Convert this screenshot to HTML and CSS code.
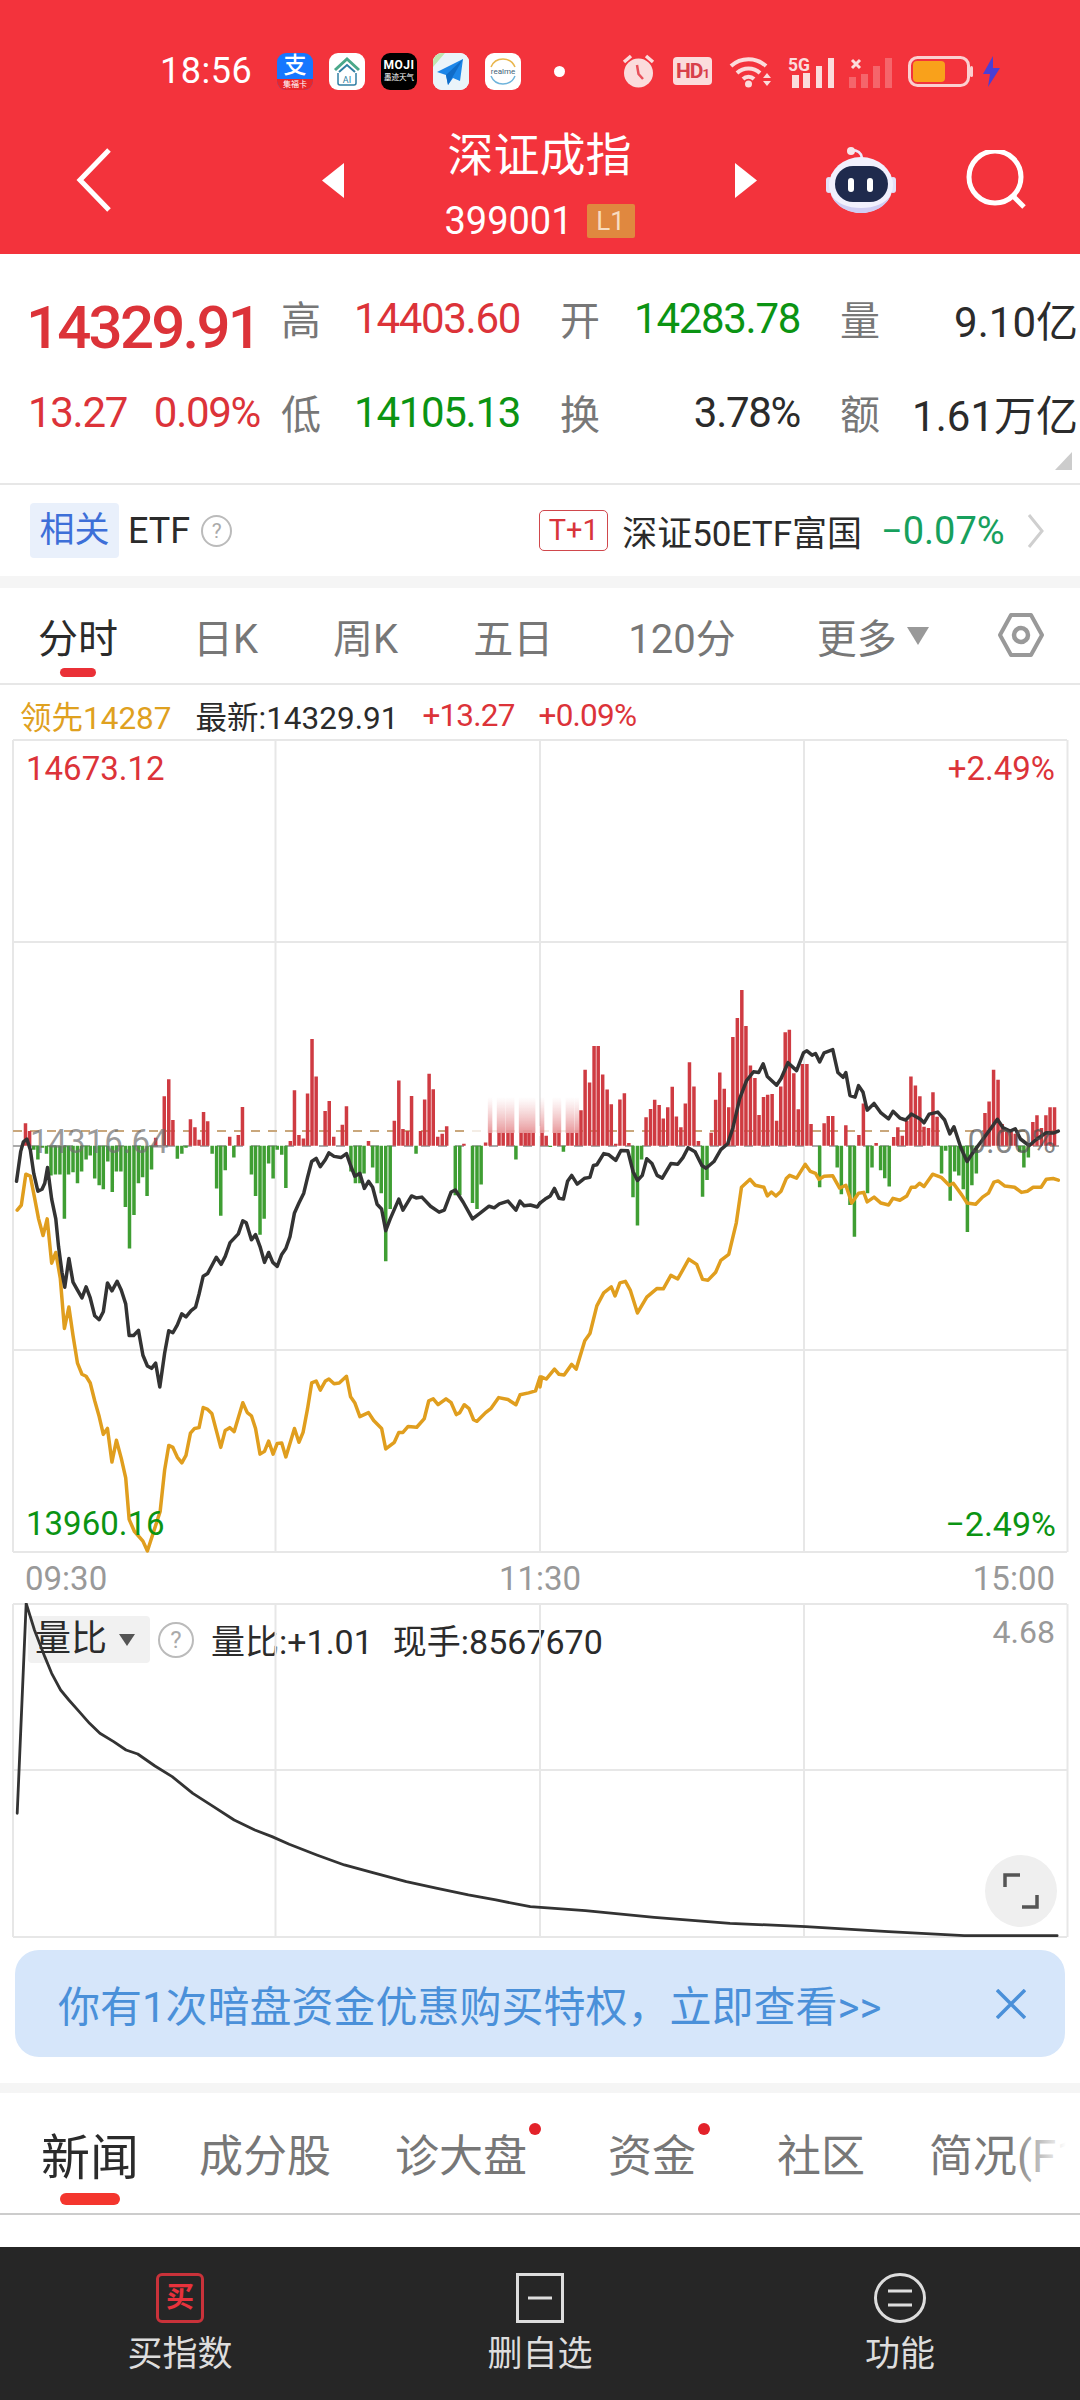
FILE: index.html
```html
<!doctype html>
<html lang="zh-CN">

<head>
    <meta charset="utf-8">
    <meta name="viewport" content="width=device-width, initial-scale=1">
    <title>深证成指</title>
    <link rel="stylesheet" href="styles.css">
</head>

<body>
<div class="page">

    <header class="header">
        <div class="status">
            <span class="status-time">18:56</span>
            <span class="app app-alipay"><b>支</b><i>集福卡</i></span>
            <span class="app app-home">
                <svg width="36" height="37" viewBox="0 0 36 37"><path d="M6 17 18 6l12 11" fill="none" stroke="#4aa88a" stroke-width="3"/><path d="M10 19 18 12l8 7" fill="none" stroke="#2f7fa4" stroke-width="2"/><path d="M9 20v10a2 2 0 0 0 2 2h14a2 2 0 0 0 2-2V20" fill="none" stroke="#2f7fa4" stroke-width="1.500"/><text x="18" y="30" font-size="9" text-anchor="middle" fill="#2f7fa4" class="svg-text">AI</text></svg>
            </span>
            <span class="app app-moji"><b>MOJI</b><i>墨迹天气</i></span>
            <span class="app app-plane">
                <svg width="36" height="37" viewBox="0 0 36 37"><rect width="36" height="37" fill="#eaf4fa"/><path d="M0 0h12L0 14z" fill="#bfe6b0"/><path d="M30 6 4 19l9 3 2 10 5-7 7 3z" fill="#1c86e8"/><path d="M30 6 13 22l2 10z" fill="#0f6cc8"/></svg>
            </span>
            <span class="app app-realme">
                <svg width="36" height="37" viewBox="0 0 36 37"><path d="M6 14a13 13 0 0 1 24 0" fill="none" stroke="#e9b64d" stroke-width="1.500"/><path d="M6 23a13 13 0 0 0 24 0" fill="none" stroke="#6fb4dc" stroke-width="1.500"/><text x="18" y="21" font-size="8" text-anchor="middle" fill="#3f5f78" class="svg-text">realme</text></svg>
            </span>
            <span class="status-dot"></span>
            <svg class="st-alarm" width="33" height="36" viewBox="0 0 33 36"><circle cx="16.500" cy="20" r="14.500" fill="#fbdcdc"/><path d="M15 12l1.500 9 4.500 5" fill="none" stroke="#e8505a" stroke-width="2.500"/><path d="M2 9l7-6M31 9l-7-6" stroke="#fbdcdc" stroke-width="3.500"/></svg>
            <span class="st-hd">HD<small>1</small></span>
            <svg class="st-wifi" width="43" height="33" viewBox="0 0 43 33"><path d="M2 11a26 26 0 0 1 35 0M8 18a17 17 0 0 1 23 0M14 24a8 8 0 0 1 11 0" fill="none" stroke="#fbdcdc" stroke-width="4"/><circle cx="19.500" cy="29" r="3.500" fill="#fbdcdc"/><path d="M34 23l4-5 4 5zM34 26l4 5 4-5z" fill="#fbdcdc"/></svg>
            <span class="st-signal">
                <svg width="46" height="33" viewBox="0 0 46 33"><text x="0" y="16" font-size="19" font-weight="700" textLength="22" lengthAdjust="spacingAndGlyphs" fill="#fbdcdc" class="svg-text">5G</text><path d="M4 20h7v13H4zM15 18h7v15h-7zM28 11h6v22h-6zM40 3h6v30h-6z" fill="#fbdcdc"/></svg>
            </span>
            <svg class="st-signal2" width="44" height="33" viewBox="0 0 44 33"><path d="M4 5l8 8M12 5l-8 8" stroke="#fbdcdc" stroke-width="3"/><path d="M1 22h7v11H1zM13 19h7v14h-7zM25 11h7v22h-7zM37 3h7v30h-7z" fill="#fbdcdc" opacity=".3"/></svg>
            <svg class="st-battery" width="66" height="31" viewBox="0 0 66 31"><rect x="1.500" y="1.500" width="59" height="28" rx="8" fill="none" stroke="#fbd0d0" stroke-width="3"/><rect x="5" y="5" width="32" height="21" rx="4" fill="#f9a11b"/><rect x="62" y="10" width="3" height="11" rx="1.500" fill="#fbd0d0"/></svg>
            <svg class="st-bolt" width="19" height="31" viewBox="0 0 19 31"><path d="M11 0 1 18h7L6 31l12-19h-7z" fill="#4b3fd6"/></svg>
        </div>

        <nav class="nav">
            <svg class="nav-back" width="36" height="64" viewBox="0 0 36 64"><path d="M33 2 4 32l29 30" fill="none" stroke="#fff" stroke-width="5"/></svg>
            <svg class="nav-prev" width="22" height="35" viewBox="0 0 22 35"><path d="M22 0v35L0 17.500z" fill="#fff"/></svg>
            <div class="nav-title">
                <div class="nav-name">深证成指</div>
                <div class="nav-code">399001<span class="nav-badge">L1</span></div>
            </div>
            <svg class="nav-next" width="22" height="35" viewBox="0 0 22 35"><path d="M0 0v35l22-17.500z" fill="#fff"/></svg>
            <svg class="nav-robot" width="72" height="66" viewBox="0 0 72 66"><path d="M26 3q10 0 11 8" fill="none" stroke="#ece8fb" stroke-width="2.500"/><circle cx="26" cy="4" r="4" fill="#f6e6ea"/><rect x="1" y="30" width="6" height="16" rx="3" fill="#e3e0f8"/><rect x="65" y="30" width="6" height="16" rx="3" fill="#e3e0f8"/><ellipse cx="36" cy="38" rx="32" ry="28" fill="#f1f0fd"/><path d="M6 48a32 28 0 0 0 60 0 32 20 0 0 1-60 0z" fill="#cfcdf3"/><rect x="10" y="19" width="53" height="36" rx="18" fill="#1f2a4d"/><rect x="23" y="31" width="6" height="14" rx="3" fill="#fff"/><rect x="42" y="31" width="6" height="14" rx="3" fill="#fff"/></svg>
            <svg class="nav-search" width="62" height="60" viewBox="0 0 62 60"><circle cx="29" cy="27" r="26" fill="none" stroke="#fff" stroke-width="5"/><path d="M47 46l11 11" stroke="#fff" stroke-width="5"/></svg>
        </nav>
    </header>

    <section class="quote">
        <div class="quote-price">14329.91</div>
        <div class="quote-key">高</div>
        <div class="quote-val up">14403.60</div>
        <div class="quote-key">开</div>
        <div class="quote-val down">14283.78</div>
        <div class="quote-key">量</div>
        <div class="quote-val quote-big">9.10亿</div>

        <div class="quote-change"><span>13.27</span><span>0.09%</span></div>
        <div class="quote-key">低</div>
        <div class="quote-val down">14105.13</div>
        <div class="quote-key">换</div>
        <div class="quote-val">3.78%</div>
        <div class="quote-key">额</div>
        <div class="quote-val quote-big">1.61万亿</div>
        <span class="quote-corner"></span>
    </section>

    <section class="etf">
        <span class="etf-tag">相关</span>
        <span class="etf-label">ETF</span>
        <span class="help etf-help">?</span>
        <span class="etf-t1">T+1</span>
        <span class="etf-name">深证50ETF富国</span>
        <span class="etf-pct">−0.07%</span>
        <svg class="etf-more" width="17" height="34" viewBox="0 0 17 34"><path d="M2 1l13 16L2 33" fill="none" stroke="#cfcfcf" stroke-width="3"/></svg>
    </section>

    <div class="band"></div>

    <section class="periods">
        <span class="period active">分时</span>
        <span class="period">日K</span>
        <span class="period">周K</span>
        <span class="period">五日</span>
        <span class="period">120分</span>
        <span class="period period-more">更多<i class="caret"></i></span>
        <svg class="periods-gear" width="48" height="46" viewBox="0 0 48 46"><path d="M14 3h20l11 20-11 20H14L3 23z" fill="none" stroke="#999" stroke-width="4" stroke-linejoin="round"/><circle cx="24" cy="23" r="7" fill="none" stroke="#999" stroke-width="4.500"/></svg>
    </section>

    <section class="legend">
        <span class="lead">领先14287</span>
        <span>最新:14329.91</span>
        <span class="up">+13.27</span>
        <span class="up">+0.09%</span>
    </section>

    <section class="chart">
        <svg class="chart-svg" width="1080" height="814" viewBox="0 739 1080 814">
            <defs>
                <linearGradient id="bar-fade" gradientUnits="userSpaceOnUse" x1="0" y1="372" x2="0" y2="463">
                    <stop offset="0" stop-color="#e89a9e" stop-opacity="0"/>
                    <stop offset="1" stop-color="#e07478" stop-opacity=".75"/>
                </linearGradient>
            </defs>
            <path class="grid" d="M13 740H1067M13 942H1067M13 1350H1067M13 1552H1067M13 740V1552M275.500 740V1552M540 740V1552M804 740V1552M1067.500 740V1552"/>
            <path class="dash-prev" d="M13 1131H1067"/>
            <path class="dash-base" d="M13 1146H1067"/>
            <rect class="dash-wipe" x="468" y="1126" width="112" height="10"/>

            <g class="soft-group" transform="translate(0 950) scale(.3444 .3954)">
                <path class="bar-soft" stroke="url(#bar-fade)" d="M1423 463V372M1449 463V372M1461 463V372M1475 463V372M1487 463V372M1513 463V372M1525 463V372M1536 463V372M1548 463V372"/>
            </g>
            <g class="soft-group" transform="translate(540 950) scale(.3444 .3954)">
                <path class="bar-soft" stroke="url(#bar-fade)" d="M6 463V372M43 463V372M55 463V372M81 463V372M93 463V372M107 463V372"/>
            </g>

            <g transform="translate(0 950) scale(.3444 .3954)">
                <path class="bar-up" d="M74 495V438M86 495V458M452 495V475M477 495V370M490 495V327M502 495V430M553 495V428M566 495V448M578 495V480M591 495V410M603 495V433M667 495V472M692 495V468M704 495V397M843 495V483M855 495V355M868 495V468M881 495V477M893 495V363M906 495V225M918 495V320M944 495V407M956 495V382M969 495V472M994 495V442M1006 495V395M1070 495V483M1145 495V432M1158 495V330M1170 495V453M1183 495V458M1195 495V369M1221 495V458M1233 495V378M1246 495V313M1258 495V352M1271 495V472M1284 495V465M1297 495V446M1347 495V490M1410 495V487M1423 495V463M1449 495V463M1461 495V463M1475 495V463M1487 495V463M1513 495V463M1525 495V463M1536 495V463M1548 495V463"/>
                <path class="bar-down" d="M98 495V505M110 495V530M123 495V500M135 495V515M148 495V570M161 495V568M174 495V568M187 495V680M199 495V568M212 495V562M225 495V590M237 495V560M250 495V530M262 495V520M275 495V578M288 495V595M300 495V605M313 495V535M326 495V612M338 495V560M351 495V560M364 495V650M376 495V755M389 495V670M402 495V590M414 495V575M427 495V622M440 495V555M515 495V528M528 495V515M540 495V500M616 495V515M629 495V603M641 495V672M654 495V557M679 495V525M730 495V568M742 495V622M755 495V720M767 495V680M780 495V540M793 495V578M805 495V505M818 495V518M830 495V602M1019 495V560M1032 495V590M1045 495V590M1057 495V565M1082 495V550M1095 495V590M1107 495V615M1120 495V787M1133 495V655M1208 495V515M1322 495V620M1335 495V620M1372 495V640M1385 495V655M1397 495V593M1498 495V530"/>
            </g>
            <g transform="translate(540 950) scale(.3444 .3954)">
                <path class="bar-up" d="M6 495V463M18 495V470M43 495V463M55 495V463M81 495V463M93 495V463M107 495V463M119 495V405M131 495V303M144 495V335M157 495V243M169 495V243M182 495V315M195 495V353M207 495V390M220 495V490M232 495V378M245 495V362M258 495V488M308 495V423M321 495V402M333 495V379M346 495V392M358 495V426M371 495V398M384 495V346M396 495V421M409 495V448M422 495V388M434 495V284M447 495V345M460 495V483M497 495V462M510 495V379M522 495V310M535 495V351M548 495V398M560 495V220M573 495V172M586 495V101M598 495V192M611 495V292M624 495V324M636 495V417M649 495V372M661 495V366M674 495V364M687 495V432M699 495V345M712 495V208M724 495V202M737 495V312M750 495V403M762 495V288M775 495V288M787 495V440M825 495V438M837 495V420M850 495V420M888 495V443M926 495V468M939 495V388M976 495V488M1027 495V473M1039 495V448M1052 495V470M1065 495V432M1077 495V320M1090 495V343M1103 495V370M1115 495V447M1128 495V450M1141 495V360M1153 495V422M1292 495V412M1304 495V383M1317 495V303M1330 495V328M1342 495V440M1355 495V460M1368 495V460M1380 495V465M1431 495V435M1443 495V418M1456 495V450M1469 495V418M1481 495V398M1494 495V398"/>
                <path class="bar-down" d="M30 495V498M68 495V510M270 495V625M283 495V697M295 495V530M472 495V624M485 495V582M812 495V600M863 495V550M875 495V618M900 495V645M913 495V725M951 495V615M964 495V550M989 495V557M1001 495V577M1014 495V598M1166 495V565M1178 495V508M1191 495V634M1204 495V560M1216 495V570M1229 495V605M1241 495V713M1254 495V595M1267 495V565M1393 495V510M1405 495V550M1418 495V525"/>
            </g>

            <g transform="translate(0 950) scale(.3444 .3954)">
                <polyline class="line-lead" points="50,658 62,645 75,567 88,572 100,625 112,680 125,722 137,680 150,792 162,765 175,830 187,957 200,903 212,975 225,1045 238,1073 250,1078 262,1095 275,1140 288,1180 300,1225 312,1210 325,1295 338,1240 352,1285 365,1335 375,1440 390,1470 415,1495 428,1520 465,1420 478,1315 490,1253 502,1258 515,1283 528,1297 540,1278 553,1222 565,1210 578,1208 590,1157 603,1162 615,1172 628,1215 641,1258 654,1215 667,1208 680,1218 705,1145 718,1170 730,1178 742,1210 755,1275 768,1268 780,1242 793,1275 805,1248 818,1247 830,1282 855,1210 868,1245 880,1220 893,1160 905,1095 918,1090 930,1113 945,1090 955,1085 970,1097 985,1095 1006,1078 1018,1130 1030,1145 1045,1180 1070,1170 1085,1190 1108,1210 1120,1262 1145,1245 1158,1220 1170,1220 1185,1205 1210,1207 1232,1185 1245,1140 1258,1135 1272,1150 1295,1135 1310,1145 1325,1175 1335,1170 1348,1150 1362,1160 1375,1188 1385,1192 1410,1170 1425,1160 1448,1132 1475,1137 1498,1150 1510,1125 1535,1120 1555,1115 1568,1080"/>
                <polyline class="line-price" points="48,585 60,510 68,485 78,478 88,505 98,565 110,610 122,605 130,590 138,550 150,630 162,680 170,750 180,815 188,853 200,780 212,840 225,860 238,880 250,852 262,880 275,925 288,935 300,915 312,842 325,862 340,838 352,860 365,895 375,975 388,975 402,962 415,1025 428,1052 440,1058 452,1045 464,1105 478,1020 490,963 502,968 515,948 528,920 540,928 555,912 568,903 578,870 590,825 603,818 628,777 642,795 654,775 668,740 692,718 705,685 715,690 730,733 742,720 755,750 768,790 780,765 792,790 805,800 818,770 830,755 842,725 855,665 868,640 882,615 893,575 905,535 918,527 930,548 945,530 955,513 970,522 990,525 1006,515 1018,545 1030,572 1045,565 1058,603 1070,585 1082,600 1095,643 1108,655 1120,710 1133,680 1158,630 1170,658 1195,622 1208,627 1225,625 1250,648 1275,663 1290,658 1310,612 1322,607 1345,638 1372,680 1395,665 1420,648 1435,652 1450,642 1475,635 1498,658 1510,635 1522,647 1540,645 1560,650 1568,640"/>
            </g>
            <g transform="translate(540 950) scale(.3444 .3954)">
                <polyline class="line-lead" points="0,1105 5,1080 18,1085 42,1060 55,1073 70,1075 92,1048 105,1060 130,988 145,970 165,900 185,867 207,852 218,875 232,842 248,838 262,860 283,918 310,878 340,856 358,857 380,823 400,832 432,782 455,795 472,833 488,835 510,815 525,785 548,770 570,690 585,600 610,580 625,595 650,600 660,622 672,612 685,622 700,610 715,578 725,570 745,577 770,542 785,560 800,565 810,580 825,572 850,571 870,602 888,595 905,640 925,615 940,613 950,637 970,625 990,640 1012,645 1025,628 1045,633 1065,622 1078,600 1090,600 1102,590 1115,598 1140,567 1165,575 1188,595 1200,590 1225,620 1240,640 1265,643 1285,625 1302,615 1318,587 1330,584 1350,597 1378,600 1398,613 1415,610 1432,600 1455,600 1470,580 1490,578 1505,582"/>
                <polyline class="line-price" points="0,640 15,630 30,622 42,603 55,628 68,630 80,585 92,570 108,592 130,577 145,575 155,545 165,543 185,515 200,518 220,532 235,507 255,508 270,560 283,583 297,570 310,528 325,540 340,570 355,577 380,540 400,542 415,525 430,500 450,510 470,545 482,552 505,535 525,505 545,490 560,450 580,375 600,330 620,308 635,310 648,288 660,320 687,342 700,325 720,285 745,305 765,260 775,255 790,266 800,262 812,283 825,260 850,252 865,310 880,322 888,310 900,368 915,372 925,343 938,360 950,405 970,388 990,412 1012,427 1025,408 1045,425 1062,430 1078,415 1105,428 1115,437 1130,415 1155,410 1175,430 1190,465 1202,447 1222,500 1240,535 1255,515 1285,480 1310,450 1328,428 1345,450 1365,458 1380,452 1395,478 1420,495 1440,480 1470,462 1490,463 1505,458"/>
            </g>
        </svg>
        <span class="axis-label top-left up">14673.12</span>
        <span class="axis-label top-right up">+2.49%</span>
        <span class="axis-label mid-left">14316.64</span>
        <span class="axis-label mid-right">0.00%</span>
        <span class="axis-label bottom-left down">13960.16</span>
        <span class="axis-label bottom-right down">−2.49%</span>
    </section>

    <div class="times"><span>09:30</span><span>11:30</span><span>15:00</span></div>

    <section class="volume">
        <div class="volume-head">
            <span class="volume-pick">量比<i class="caret caret-dark"></i></span>
            <span class="help volume-help">?</span>
            <span class="volume-text">量比:+1.01</span>
            <span class="volume-text">现手:8567670</span>
        </div>
        <svg class="chart-svg volume-svg" width="1080" height="335" viewBox="0 1603 1080 335">
            <path class="grid" d="M13 1604H1067M13 1770H1067M13 1937H1067M13 1604V1937M275.500 1604V1937M540 1604V1937M804 1604V1937M1067.500 1604V1937"/>
            <g transform="translate(0 1560) scale(.6887 .3333)">
                <polyline class="line-ratio" points="25,760 38,130 50,210 65,290 75,340 88,390 100,420 115,455 130,490 145,520 165,545 183,570 200,582 225,618 250,650 280,700 310,740 340,780 370,810 395,830 420,853 460,885 500,915 540,937 590,965 635,985 680,1005 720,1020 770,1040 850,1052 950,1072 1060,1090 1170,1100 1290,1115 1400,1127 1535,1127"/>
            </g>
        </svg>
        <span class="volume-max">4.68</span>
        <span class="expand">
            <svg width="36" height="38" viewBox="0 0 36 38"><path d="M2 15V3h15M34 23v12H19" fill="none" stroke="#555" stroke-width="3.500"/></svg>
        </span>
    </section>

    <section class="banner">
        <span class="banner-text">你有1次暗盘资金优惠购买特权，立即查看&gt;&gt;</span>
        <svg width="30" height="30" viewBox="0 0 30 30"><path d="M1 1l28 28M29 1 1 29" stroke="#4a90d9" stroke-width="3.500"/></svg>
    </section>

    <div class="band band-news"></div>

    <section class="news-tabs">
        <span class="news-tab active">新闻</span>
        <span class="news-tab">成分股</span>
        <span class="news-tab dotted">诊大盘</span>
        <span class="news-tab dotted">资金</span>
        <span class="news-tab">社区</span>
        <span class="news-tab">简况(F10)</span>
    </section>

    <div class="news-body"></div>

    <footer class="actions">
        <div class="action">
            <span class="action-buy">买</span>
            <span class="action-label">买指数</span>
        </div>
        <div class="action">
            <svg width="48" height="50" viewBox="0 0 48 50"><rect x="1.500" y="1.500" width="45" height="47" fill="none" stroke="#ddd" stroke-width="3"/><path d="M12 25h24" stroke="#ddd" stroke-width="3"/></svg>
            <span class="action-label">删自选</span>
        </div>
        <div class="action">
            <svg width="52" height="50" viewBox="0 0 52 50"><ellipse cx="26" cy="25" rx="24.500" ry="23.500" fill="none" stroke="#ddd" stroke-width="3"/><path d="M14 18h24M14 32h24" stroke="#ddd" stroke-width="3"/></svg>
            <span class="action-label">功能</span>
        </div>
    </footer>
</div>
</body>
</html>
```

FILE: styles.css
```css
:root {
    /* Colors */
    --color-header: #f3333c;
    --color-up: #dc3339;
    --color-down: #0b9413;
    --color-text: #2b2b2b;
    --color-muted: #777;
    --color-line: #e7e7e7;
    --color-band: #f5f5f5;

    /* Typography */
    --font-stack: Roboto, 'Noto Sans CJK SC', sans-serif;
}

*, *::before, *::after {
    box-sizing: border-box;
}

body {
    margin: 0;
    background: #fff;
    font-family: var(--font-stack);
    color: var(--color-text);
}

.page {
    width: 1080px;
    height: 2400px;
    overflow: hidden;
    display: flex;
    flex-direction: column;
}

.svg-text {
    font-family: var(--font-stack);
}

.up {
    color: var(--color-up);
}

.down {
    color: var(--color-down);
}

/* Header */
.header {
    height: 254px;
    background: var(--color-header);
    color: #fff;
}

.status {
    height: 112px;
    padding: 30px 0 0 160px;
    display: flex;
    align-items: center;
}

.status-time {
    width: 93px;
    margin-right: 24px;
    font-size: 36px;
    letter-spacing: .5px;
}

.app {
    width: 36px;
    height: 37px;
    margin-right: 16px;
    border-radius: 9px;
    background: #fff;
    overflow: hidden;
    display: flex;
    flex-direction: column;
    align-items: center;
}

.app b, .app i {
    font-style: normal;
    line-height: 1;
}

.app-alipay {
    background: #1677ff;
    overflow: visible;
}

.app-alipay b {
    flex: 1;
    font-size: 23px;
    font-weight: 500;
    line-height: 26px;
}

.app-alipay i {
    width: 100%;
    border-radius: 0 0 9px 9px;
    background: #e8262a;
    font-size: 8px;
    line-height: 11px;
    text-align: center;
}

.app-moji {
    background: #000;
    padding-top: 6px;
}

.app-moji b {
    font-size: 12px;
    letter-spacing: .5px;
    margin-bottom: 3px;
}

.app-moji i {
    font-size: 7.500px;
    white-space: nowrap;
}

.status-dot {
    width: 11px;
    height: 11px;
    margin: 0 57px 0 17px;
    border-radius: 50%;
    background: #fff;
}

.st-hd {
    width: 39px;
    height: 28px;
    margin: 0 17px 0 18px;
    border-radius: 4px;
    background: #fbdcdc;
    color: #d8404a;
    font-size: 21px;
    font-weight: 700;
    line-height: 28px;
    text-align: center;
    letter-spacing: -1px;
    white-space: nowrap;
}

.st-hd small {
    font-size: 13px;
}

.st-wifi {
    margin-right: 16px;
}

.st-signal {
    height: 33px;
    margin-right: 14px;
}

.st-signal2 {
    margin-right: 16px;
}

.st-battery {
    margin-right: 8px;
}

.nav {
    height: 136px;
    padding-left: 76px;
    display: flex;
    align-items: center;
}

.nav-prev {
    margin-left: 210px;
}

.nav-title {
    width: 391px;
    padding-top: 7px;
    display: flex;
    flex-direction: column;
    align-items: center;
    gap: 18px;
}

.nav-name {
    font-size: 46px;
    line-height: 56px;
}

.nav-code {
    font-size: 38px;
    line-height: 40px;
    display: flex;
    align-items: center;
    gap: 14px;
}

.nav-badge {
    width: 48px;
    height: 34px;
    background: #e0883f;
    border-radius: 2px;
    color: #f8dcc0;
    font-size: 26px;
    line-height: 34px;
    text-align: center;
}

.nav-robot {
    margin-left: 68px;
}

.nav-search {
    margin-left: 69px;
}

/* Quote numbers */
.quote {
    position: relative;
    height: 231px;
    padding: 17px 2px 0 28px;
    border-bottom: 2px solid var(--color-line);
    display: grid;
    grid-template-columns: 253px 40px 199px 80px 200px 80px 198px;
    grid-template-rows: 94px 94px;
    align-items: center;
}

.quote-price {
    margin-left: -2px;
    padding-top: 18px;
    font-size: 60px;
    font-weight: 500;
    letter-spacing: -2.800px;
    color: var(--color-up);
}

.quote-change {
    width: 232px;
    display: flex;
    justify-content: space-between;
    font-size: 42px;
    color: var(--color-up);
    letter-spacing: -1.300px;
}

.quote-key {
    font-size: 40px;
    color: var(--color-muted);
    text-align: right;
}

.quote-val {
    font-size: 42px;
    text-align: right;
    letter-spacing: -1.300px;
    white-space: nowrap;
}

.quote-big {
    letter-spacing: 0;
}

.quote-corner {
    position: absolute;
    right: 8px;
    bottom: 13px;
    border-style: solid;
    border-width: 0 0 18px 17px;
    border-color: transparent transparent #ccc transparent;
}

/* ETF row */
.etf {
    height: 91px;
    padding-left: 30px;
    display: flex;
    align-items: center;
}

.etf-tag {
    width: 89px;
    height: 55px;
    border-radius: 4px;
    background: #e9f0fb;
    color: #3d6fd8;
    font-size: 35px;
    line-height: 55px;
    text-align: center;
}

.etf-label {
    margin-left: 9px;
    font-size: 36px;
}

.help {
    width: 31px;
    height: 32px;
    border: 2px solid #bbb;
    border-radius: 50%;
    color: #aaa;
    font-size: 21px;
    line-height: 28px;
    text-align: center;
}

.etf-help {
    margin-left: 11px;
}

.etf-t1 {
    width: 69px;
    height: 41px;
    margin-left: 307px;
    border: 1px solid #d0474c;
    border-radius: 5px;
    color: #d8343a;
    font-size: 29px;
    line-height: 38px;
    text-align: center;
}

.etf-name {
    margin-left: 14px;
    font-size: 35px;
    white-space: nowrap;
}

.etf-pct {
    margin-left: 19px;
    color: #17a05d;
    font-size: 38px;
    white-space: nowrap;
}

.etf-more {
    margin-left: 22px;
}

.band {
    height: 12px;
    background: var(--color-band);
}

/* Period tabs */
.periods {
    position: relative;
    height: 97px;
    padding-left: 38px;
    border-bottom: 2px solid var(--color-line);
    display: flex;
    align-items: center;
    gap: 75px;
}

.period {
    position: relative;
    font-size: 40px;
    color: var(--color-muted);
    white-space: nowrap;
    display: flex;
    align-items: center;
}

.period.active {
    color: var(--color-text);
}

.period.active::after {
    content: "";
    position: absolute;
    left: 22px;
    top: 61px;
    width: 36px;
    height: 9px;
    border-radius: 5px;
    background: #ea3037;
}

.period-more {
    margin-left: 6px;
}

.caret {
    width: 0;
    height: 0;
    margin-left: 10px;
    border-style: solid;
    border-width: 18px 11px 0;
    border-color: #999 transparent transparent;
}

.periods-gear {
    position: absolute;
    right: 35px;
    top: 24px;
}

/* Legend above chart */
.legend {
    height: 54px;
    padding: 6px 0 0 20px;
    display: flex;
    align-items: center;
    gap: 24px;
    font-size: 31.500px;
    white-space: nowrap;
}

.legend .up {
    letter-spacing: -.8px;
}

.lead {
    color: #dfa11f;
}

/* Charts */
.chart {
    position: relative;
    height: 814px;
}

.chart-svg {
    display: block;
}

.grid {
    fill: none;
    stroke: var(--color-line);
    stroke-width: 2;
}

.dash-prev, .dash-base {
    fill: none;
    stroke-width: 2;
    stroke-dasharray: 9 8;
}

.dash-prev {
    stroke: #c9a77c;
}

.dash-base {
    stroke: #aaa;
}

.dash-wipe {
    fill: #fff;
    opacity: .8;
}

.bar-up, .bar-down, .bar-soft {
    fill: none;
    stroke-width: 3.500;
    vector-effect: non-scaling-stroke;
}

.bar-up {
    stroke: #cf3b42;
}

.bar-down {
    stroke: #3f9e33;
}

.bar-soft {
    stroke-width: 4.500;
}

.soft-group {
    filter: blur(1.500px);
}

.line-price, .line-lead, .line-ratio {
    fill: none;
    stroke-linejoin: round;
    stroke-linecap: round;
    vector-effect: non-scaling-stroke;
}

.line-price {
    stroke: #333;
    stroke-width: 3.500;
}

.line-lead {
    stroke: #e09e1e;
    stroke-width: 3.500;
}

.line-ratio {
    stroke: #333;
    stroke-width: 2.800;
}

.axis-label {
    position: absolute;
    font-size: 33px;
    line-height: 40px;
}

.top-left { left: 26px; top: 10px; }
.top-right { right: 25px; top: 10px; }
.mid-left { left: 30px; top: 383px; color: rgb(110 110 110 / .7); }
.mid-right { right: 24px; top: 383px; color: rgb(80 80 80 / .7); }
.bottom-left { left: 26px; top: 765px; }
.bottom-right { right: 24px; top: 765px; font-size: 34px; }

.times {
    height: 50px;
    padding: 0 25px;
    display: flex;
    justify-content: space-between;
    align-items: center;
    color: #999;
    font-size: 33px;
}

.volume {
    position: relative;
    height: 335px;
}

.volume-svg {
    position: relative;
}

.volume-head {
    position: absolute;
    left: 28px;
    top: 12px;
    display: flex;
    align-items: center;
    font-size: 34px;
    white-space: nowrap;
}

.volume-pick {
    width: 122px;
    height: 47px;
    padding-left: 7px;
    border-radius: 4px;
    background: #f1f1f1;
    font-size: 36px;
    line-height: 47px;
    display: flex;
    align-items: center;
}

.caret-dark {
    margin-left: 12px;
    border-width: 12px 8px 0;
    border-color: #555 transparent transparent;
}

.volume-help {
    width: 36px;
    height: 36px;
    margin-left: 8px;
    font-size: 24px;
    line-height: 32px;
}

.volume-text {
    margin-left: 17px;
}

.volume-text + .volume-text {
    margin-left: 20px;
}

.volume-max {
    position: absolute;
    right: 25px;
    top: 10px;
    color: #999;
    font-size: 32px;
}

.expand {
    position: absolute;
    left: 985px;
    top: 252px;
    width: 72px;
    height: 72px;
    border-radius: 50%;
    background: #efefef;
    display: flex;
    align-items: center;
    justify-content: center;
}

/* Promo banner */
.banner {
    height: 107px;
    margin: 12px 15px 26px;
    padding: 0 39px 0 43px;
    border-radius: 24px;
    background: #d6e6fa;
    display: flex;
    align-items: center;
    justify-content: space-between;
    color: #4a90d9;
    font-size: 42px;
    white-space: nowrap;
}

.band-news {
    height: 10px;
}

/* News tabs */
.news-tabs {
    position: relative;
    height: 122px;
    padding: 0 0 0 41px;
    border-bottom: 2px solid #ccc;
    overflow: hidden;
    display: flex;
    align-items: center;
    gap: 64px;
    white-space: nowrap;
}

.news-tabs::after {
    content: "";
    position: absolute;
    right: 0;
    top: 0;
    bottom: 0;
    width: 70px;
    background: linear-gradient(to right, rgb(255 255 255 / 0), #fff 80%);
}

.news-tab {
    position: relative;
    font-size: 44px;
    color: var(--color-muted);
}

.news-tab.active {
    margin-right: -4px;
    font-size: 49px;
    color: var(--color-text);
}

.news-tab.active::after {
    content: "";
    position: absolute;
    left: 19px;
    top: 75px;
    width: 60px;
    height: 12px;
    border-radius: 6px;
    background: #f4362e;
}

.dotted {
    margin-right: 17px;
}

.dotted::after {
    content: "";
    position: absolute;
    right: -14px;
    top: 2px;
    width: 12px;
    height: 12px;
    border-radius: 50%;
    background: #e3222a;
}

.news-body {
    height: 32px;
}

/* Bottom actions */
.actions {
    flex: 1;
    padding-top: 26px;
    background: #262626;
    display: grid;
    grid-template-columns: repeat(3, 1fr);
}

.action {
    display: flex;
    flex-direction: column;
    align-items: center;
    gap: 9px;
}

.action-buy {
    width: 48px;
    height: 50px;
    border: 3px solid #c9323a;
    border-radius: 6px;
    color: #e8323c;
    font-size: 28px;
    font-weight: 700;
    line-height: 43px;
    text-align: center;
}

.action-label {
    color: #ddd;
    font-size: 35px;
    line-height: 46px;
}
```
